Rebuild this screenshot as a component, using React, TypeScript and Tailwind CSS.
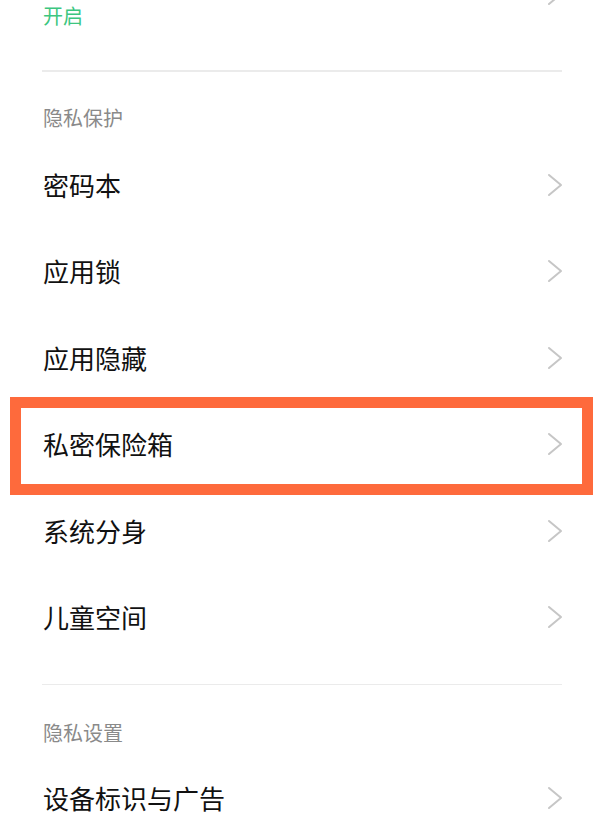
const protectItems = ["密码本", "应用锁", "应用隐藏", "私密保险箱", "系统分身", "儿童空间"];

function Chevron() {
  return (
    <svg width="16" height="24" viewBox="0 0 16 24" fill="none" className="shrink-0">
      <path d="M2 2 L14 12 L2 22" stroke="#c6c6c6" strokeWidth="2" strokeLinecap="round" strokeLinejoin="round" />
    </svg>
  );
}

function Row({ label, highlight }: { label: string; highlight?: boolean }) {
  return (
    <div className="relative h-[86.5px] flex items-center justify-between pl-[43px] pr-[45px]">
      <span className="text-[26px] leading-[36px] text-[#111]">{label}</span>
      <Chevron />
      {highlight && (
        <div className="absolute left-[10px] right-[15px] top-[-4.5px] bottom-[-7px] border-[11px] border-[#fe6a3c] pointer-events-none" />
      )}
    </div>
  );
}

export default function App() {
  return (
    <div
      className="w-[608px] h-[814px] overflow-hidden bg-white"
      style={{ fontFamily: '"Noto Sans CJK SC", "Noto Sans", sans-serif' }}
    >
      {/* tail of the previous entry */}
      <div className="relative h-[70px] pl-[43px] pr-[45px]">
        <div className="absolute right-[45px] top-[-18px]">
          <Chevron />
        </div>
        <p className="pt-[4px] text-[20px] leading-[24px] text-[#3cc680]">开启</p>
      </div>
      <div className="ml-[42px] mr-[46px] h-[1.5px] bg-[#ebebeb]" />

      {/* 隐私保护 */}
      <p className="pl-[43px] pt-[34px] pb-[12px] text-[20px] leading-[24px] text-[#8a8a8a]">隐私保护</p>
      {protectItems.map((item) => (
        <Row key={item} label={item} highlight={item === "私密保险箱"} />
      ))}

      <div className="mt-[23px] ml-[42px] mr-[46px] h-[1.5px] bg-[#ebebeb]" />

      {/* 隐私设置 */}
      <p className="pl-[43px] pt-[36px] pb-[10px] text-[20px] leading-[24px] text-[#8a8a8a]">隐私设置</p>
      <Row label="设备标识与广告" />
    </div>
  );
}
